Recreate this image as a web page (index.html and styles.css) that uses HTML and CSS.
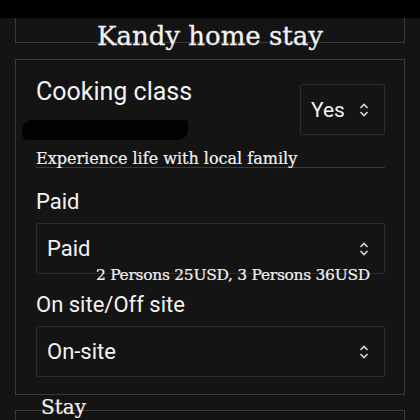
FILE: index.html
```html
<!DOCTYPE html>
<html lang="en">
<head>
  <meta charset="UTF-8">
  <meta name="viewport" content="width=device-width, initial-scale=1.0">
  <title>Kandy home stay</title>
  <link rel="stylesheet" href="styles.css">
</head>
<body>
  <div class="topbar"></div>

  <div class="title-box">
    <h1>Kandy home stay</h1>
  </div>

  <div class="card">
    <div class="card-head">
      <div class="card-name">
        <h2>Cooking class</h2>
        <div class="redacted"></div>
      </div>
      <div class="select small">
        <span>Yes</span>
        <svg class="chevron" width="10" height="14" viewBox="0 0 10 14"><path d="M1.5 5 L5 1.5 L8.5 5 M1.5 9 L5 12.5 L8.5 9" fill="none" stroke="#d8d8d8" stroke-width="1.6"/></svg>
      </div>
    </div>

    <p class="desc">Experience life with local family</p>

    <div class="label">Paid</div>
    <div class="select">
      <span>Paid</span>
      <svg class="chevron" width="10" height="14" viewBox="0 0 10 14"><path d="M1.5 5 L5 1.5 L8.5 5 M1.5 9 L5 12.5 L8.5 9" fill="none" stroke="#d8d8d8" stroke-width="1.6"/></svg>
    </div>
    <p class="note">2 Persons 25USD, 3 Persons 36USD</p>

    <div class="label">On site/Off site</div>
    <div class="select">
      <span>On-site</span>
      <svg class="chevron" width="10" height="14" viewBox="0 0 10 14"><path d="M1.5 5 L5 1.5 L8.5 5 M1.5 9 L5 12.5 L8.5 9" fill="none" stroke="#d8d8d8" stroke-width="1.6"/></svg>
    </div>
  </div>

  <h3 class="section">Stay</h3>
  <div class="card next"></div>
</body>
</html>
```

FILE: styles.css
```css
html, body {
  height: 100%;
  overflow: hidden;
}

body {
  margin: 0;
  background-color: #141414;
  color: #f2f2f2;
  font-family: Roboto, "Liberation Sans", sans-serif;
}

.topbar {
  height: 18px;
  background-color: #000;
}

.title-box {
  height: 24px;
  margin: 0 15px;
  border: 1px solid #3a3a3a;
  border-top: none;
  display: flex;
  justify-content: center;
  align-items: flex-start;
}

.title-box h1 {
  margin: 0;
  padding-top: 3px;
  font-family: "DejaVu Serif", serif;
  font-weight: normal;
  font-size: 26px;
  line-height: 30px;
  white-space: nowrap;
  -webkit-text-stroke: 0.3px #f2f2f2;
}

.card {
  margin: 16px 15px 0;
  padding: 17px 19px 17px 20px;
  border: 1px solid #3a3a3a;
}

.card-head {
  display: flex;
  justify-content: space-between;
  align-items: flex-start;
}

.card-name h2 {
  margin: 0;
  font-weight: normal;
  font-size: 25px;
  line-height: 30px;
}

.redacted {
  width: 166px;
  height: 20px;
  margin: 13px 0 0 -14px;
  background-color: #020202;
  border-radius: 10px 4px 10px 6px;
}

.select {
  height: 49px;
  border: 1px solid #2c2c2c;
  border-radius: 2px;
  display: flex;
  align-items: center;
  justify-content: space-between;
  padding: 0 15px 0 10px;
  font-size: 22px;
  line-height: 26px;
}

.select.small {
  width: 58px;
  margin-top: 7px;
  font-size: 21px;
}

.desc {
  margin: 9px 0 0;
  padding-top: 2px;
  font-family: "DejaVu Serif", serif;
  font-size: 16px;
  line-height: 16px;
  border-bottom: 1px solid #3a3a3a;
  -webkit-text-stroke: 0.2px #f2f2f2;
}

.label {
  margin: 21px 0 8px;
  font-size: 22px;
  line-height: 26px;
}

.note {
  margin: -9px 0 0 60px;
  font-family: "DejaVu Serif", serif;
  font-size: 15.5px;
  letter-spacing: -0.3px;
  line-height: 20px;
  white-space: nowrap;
  -webkit-text-stroke: 0.2px #f2f2f2;
}

.note + .label {
  margin-top: 7px;
}

.section {
  margin: 0 0 0 41px;
  font-family: "DejaVu Serif", serif;
  font-weight: normal;
  font-size: 20px;
  line-height: 24px;
  -webkit-text-stroke: 0.2px #f2f2f2;
}

.card.next {
  margin-top: -9px;
  height: 60px;
}
```
